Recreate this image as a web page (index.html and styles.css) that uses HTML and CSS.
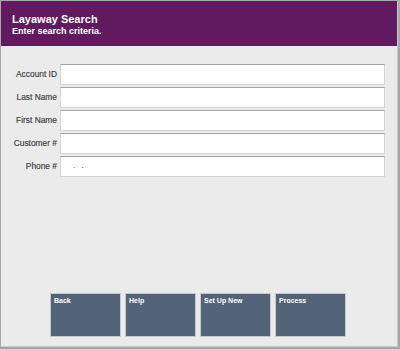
FILE: index.html
```html
<!DOCTYPE html>
<html lang="en">
<head>
  <meta charset="UTF-8" />
  <title>Layaway Search</title>
  <link rel="stylesheet" href="styles.css">
</head>
<body>
  <div class="screen">
    <div class="header">
      <div class="title">Layaway Search</div>
      <div class="subtitle">Enter search criteria.</div>
    </div>

    <form class="search-form">
      <div class="row">
        <label>Account ID</label>
        <div class="field"></div>
      </div>
      <div class="row">
        <label>Last Name</label>
        <div class="field"></div>
      </div>
      <div class="row">
        <label>First Name</label>
        <div class="field"></div>
      </div>
      <div class="row">
        <label>Customer #</label>
        <div class="field"></div>
      </div>
      <div class="row">
        <label>Phone #</label>
        <div class="field phone">. .</div>
      </div>
    </form>

    <div class="buttons">
      <div class="btn">Back</div>
      <div class="btn">Help</div>
      <div class="btn">Set Up New</div>
      <div class="btn">Process</div>
    </div>
  </div>
</body>
</html>
```
FILE: styles.css
```css
body {
  margin: 0;
  font-family: 'Liberation Sans', Arial, sans-serif;
  background: #a8a8a8;
}
.screen {
  width: 396px;
  height: 345px;
  margin-top: 1px;
  margin-left: 1px;
  background: #ebebeb;
  border-right: 1px solid #c8c8c8;
  border-bottom: 1px solid #c8c8c8;
  display: flex;
  flex-direction: column;
}
.header {
  background: #611a5f;
  color: #ffffff;
  height: 45px;
  padding: 12px 0 0 11px;
  box-sizing: border-box;
  font-weight: bold;
}
.title {
  font-size: 11px;
  line-height: 13px;
}
.subtitle {
  font-size: 9px;
  line-height: 10px;
}
.search-form {
  margin: 17px 0 0 0;
  display: flex;
  flex-direction: column;
  gap: 1px;
}
.row {
  display: flex;
  align-items: center;
  height: 22px;
}
.row label {
  width: 56px;
  text-align: right;
  font-size: 8.4px;
  color: #3c3c3c;
  padding-right: 3px;
  -webkit-text-stroke: 0.15px #3c3c3c;
}
.field {
  width: 325px;
  height: 21px;
  box-sizing: border-box;
  background: #ffffff;
  border: 1px solid #d4d4d4;
  border-top-color: #a4a4a4;
}
.phone {
  font-size: 8px;
  line-height: 18px;
  padding-left: 12px;
  color: #333;
  letter-spacing: 2px;
}
.buttons {
  margin-top: auto;
  margin-bottom: 9px;
  margin-left: 49px;
  display: flex;
  gap: 4px;
}
.btn {
  width: 71px;
  height: 44px;
  box-sizing: border-box;
  background: #536479;
  border: 1px solid #c6c9cd;
  color: #ffffff;
  font-size: 7px;
  font-weight: bold;
  padding: 3px 3px;
}
```
